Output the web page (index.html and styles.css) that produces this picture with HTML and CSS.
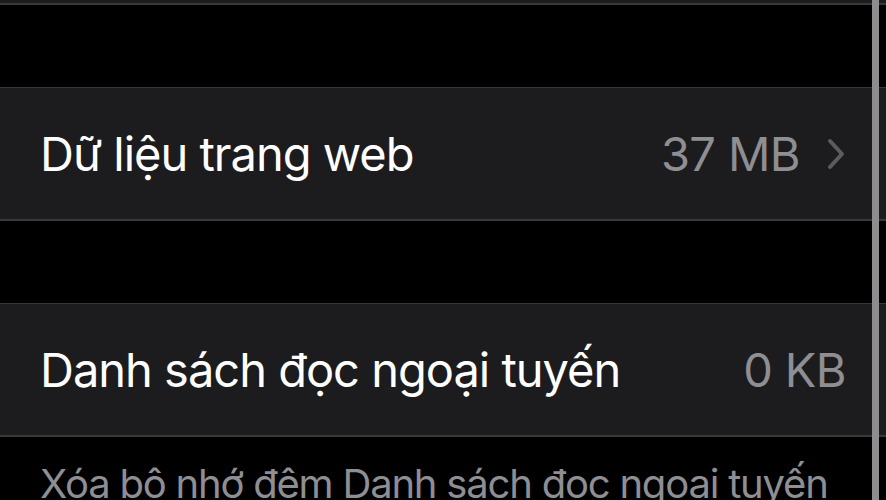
FILE: index.html
```html
<!DOCTYPE html>
<html lang="vi">
<head>
    <meta charset="UTF-8">
    <meta name="viewport" content="width=device-width, initial-scale=1.0">
    <title>Dữ liệu trang web</title>
    <link rel="stylesheet" href="styles.css">
</head>
<body>
    <div class="group group-top"></div>

    <div class="group">
        <div class="row">
            <span class="label">Dữ liệu trang web</span>
            <span class="value">37 MB</span>
            <svg class="chevron" width="20" height="32" viewBox="0 0 20 32">
                <path d="M4 3 L16 16 L4 29" fill="none" stroke="currentColor" stroke-width="4" stroke-linecap="round" stroke-linejoin="round"/>
            </svg>
        </div>
    </div>

    <div class="group">
        <div class="row">
            <span class="label">Danh sách đọc ngoại tuyến</span>
            <span class="value">0 KB</span>
        </div>
    </div>

    <p class="footer">Xóa bộ nhớ đệm Danh sách đọc ngoại tuyến</p>

    <div class="scrollbar"></div>
</body>
</html>
```

FILE: styles.css
```css
html, body {
    height: 100%;
}
body {
    margin: 0;
    background-color: #000;
    color: #fff;
    font-family: Inter, "Noto Sans", sans-serif;
    overflow: hidden;
    position: relative;
}
.group {
    background-color: #1c1c1e;
    border-top: 1px solid #38383a;
    border-bottom: 2px solid #38383a;
    margin-top: 82px;
}
.group-top {
    height: 3px;
    margin-top: 0;
    border-top: none;
}
.row {
    height: 131px;
    display: flex;
    align-items: center;
    padding: 0 40px;
}
.label {
    flex: 1;
    font-size: 47px;
    letter-spacing: -1px;
}
.value {
    font-size: 47px;
    color: #8e8e93;
    letter-spacing: -0.6px;
}
.chevron {
    color: #5c5c60;
    margin-left: 26px;
}
.footer {
    margin: 22px 40px 0;
    font-size: 40px;
    color: #8e8e93;
    white-space: nowrap;
    letter-spacing: -1.2px;
}
.scrollbar {
    position: absolute;
    top: 0;
    bottom: 0;
    left: 872px;
    width: 7px;
    background-color: #8d8d8f;
}
```
